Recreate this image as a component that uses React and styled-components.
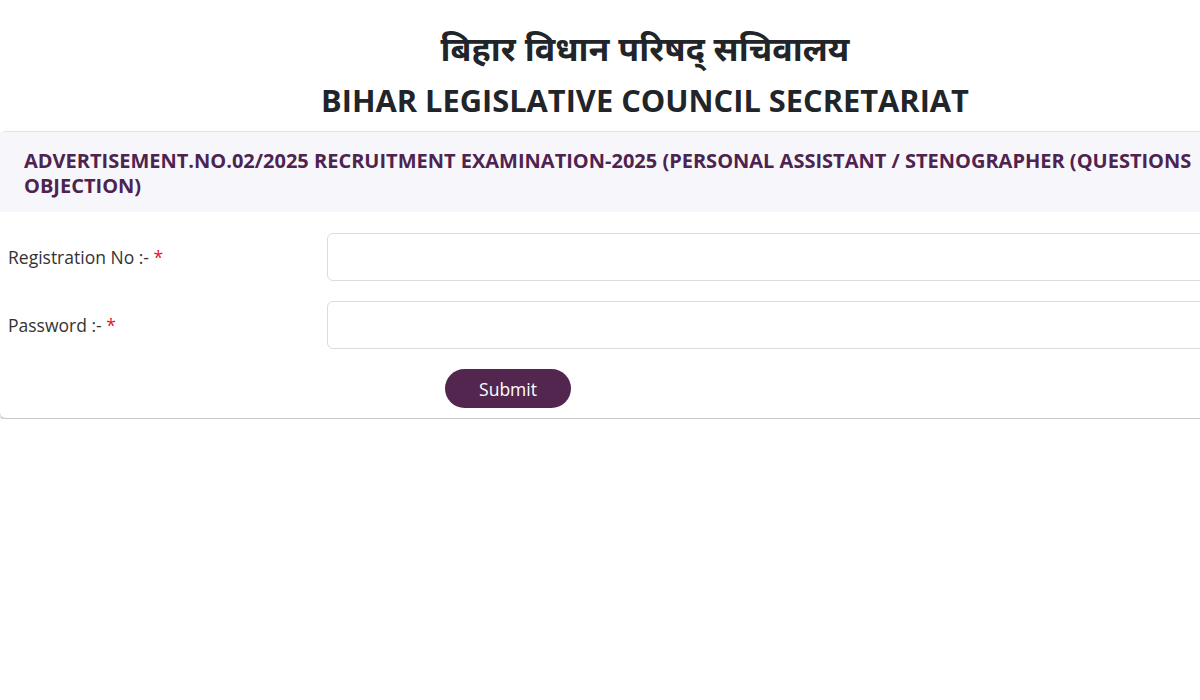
import styled, { createGlobalStyle } from "styled-components";

const GlobalStyle = createGlobalStyle`
  html, body {
    margin: 0;
    padding: 0;
    background: #ffffff;
    overflow: hidden;
  }
  body {
    font-family: "Open Sans", "Noto Sans", "Liberation Sans", sans-serif;
    color: #212529;
  }
`;

const Page = styled.div`
  width: 1290px;
  padding-top: 29px;
`;

const Heading = styled.header`
  text-align: center;
  color: #212529;
`;

const HindiTitle = styled.h1`
  margin: 0;
  font-family: "Noto Sans Devanagari", "Noto Sans", "Lohit Devanagari", sans-serif;
  font-size: 34px;
  font-weight: 700;
  line-height: 48px;
`;

const EnglishTitle = styled.h2`
  margin: 0;
  font-size: 30.8px;
  font-weight: 700;
  line-height: 46px;
`;

const Card = styled.section`
  margin-top: 8px;
  border: 1px solid #e4e4e8;
  border-bottom-color: #c8c8c8;
  border-left: none;
  border-radius: 6px;
  box-shadow: 0 2px 3px rgba(0, 0, 0, 0.22);
  background: #ffffff;
  overflow: hidden;
`;

const CardHeader = styled.div`
  background: #f7f7fb;
  padding: 16px 24px 14px;
  color: #4e2350;
  font-size: 20px;
  font-weight: 700;
  line-height: 25px;
`;

const Form = styled.form`
  padding: 21px 0 10px;
`;

const Row = styled.div`
  display: grid;
  grid-template-columns: 327px 1fr;
  align-items: center;
  margin-bottom: 20px;
`;

const Label = styled.label`
  padding-left: 8px;
  font-size: 17.5px;
  color: #333333;
`;

const Star = styled.span`
  color: #e8112d;
`;

const Input = styled.input`
  height: 48px;
  box-sizing: border-box;
  border: 1px solid #dcdcdc;
  border-radius: 6px;
  font-size: 16px;
  padding: 0 12px;
  outline: none;
`;

const Actions = styled.div`
  padding-left: 445px;
`;

const Submit = styled.button`
  width: 126px;
  height: 39px;
  border: none;
  border-radius: 20px;
  background: #52264f;
  color: #ffffff;
  font-family: inherit;
  font-size: 17.5px;
  cursor: pointer;
`;

export default function App() {
  return (
    <Page>
      <GlobalStyle />
      <Heading>
        <HindiTitle>बिहार विधान परिषद् सचिवालय</HindiTitle>
        <EnglishTitle>BIHAR LEGISLATIVE COUNCIL SECRETARIAT</EnglishTitle>
      </Heading>
      <Card>
        <CardHeader>
          ADVERTISEMENT.NO.02/2025 RECRUITMENT EXAMINATION-2025 (PERSONAL
          ASSISTANT / STENOGRAPHER (QUESTIONS OBJECTION)
        </CardHeader>
        <Form onSubmit={(e) => e.preventDefault()}>
          <Row>
            <Label htmlFor="regno">
              Registration No :- <Star>*</Star>
            </Label>
            <Input id="regno" type="text" />
          </Row>
          <Row>
            <Label htmlFor="pwd">
              Password :- <Star>*</Star>
            </Label>
            <Input id="pwd" type="password" />
          </Row>
          <Actions>
            <Submit type="submit">Submit</Submit>
          </Actions>
        </Form>
      </Card>
    </Page>
  );
}
